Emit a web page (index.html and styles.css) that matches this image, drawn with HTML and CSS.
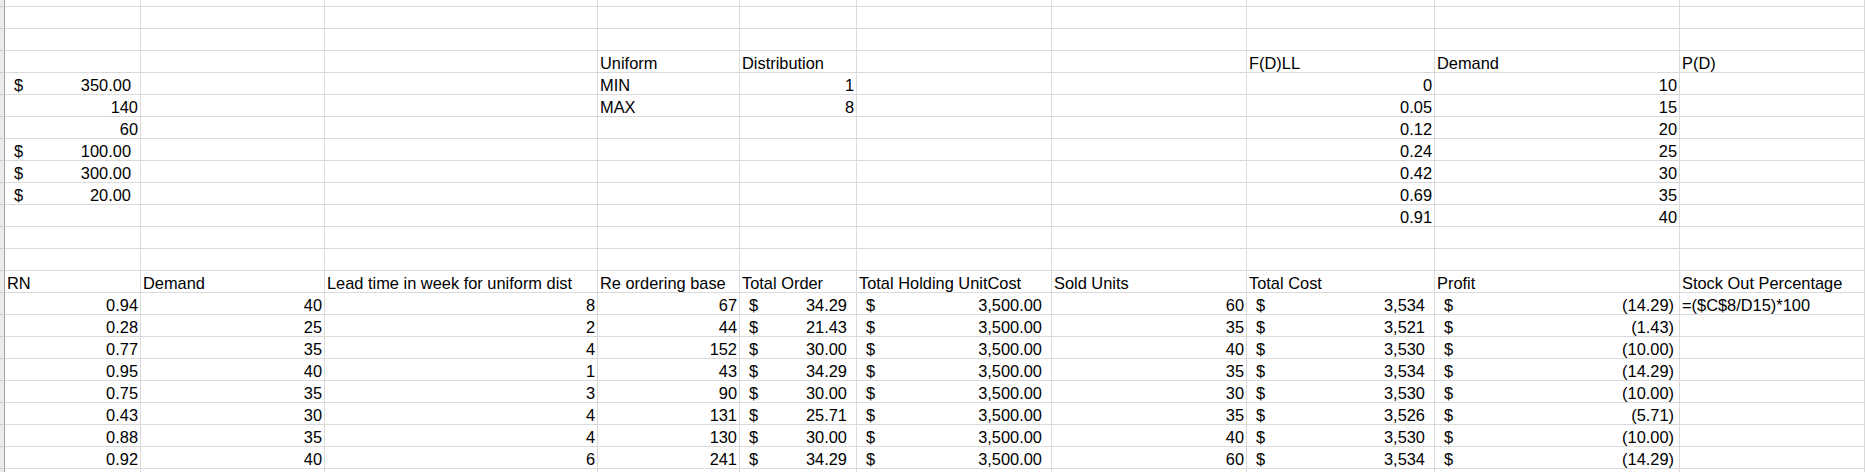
FILE: index.html
```html
<!DOCTYPE html>
<html lang="en">
<head>
<meta charset="utf-8">
<title>Inventory simulation sheet</title>
<link rel="stylesheet" href="styles.css">
</head>
<body>
<div class="sheet">
  <div class="r top"><span class="rh"></span><span></span><span></span><span></span><span></span><span></span><span></span><span></span><span></span><span></span><span></span></div>
  <div class="r"><span class="rh"></span><span></span><span></span><span></span><span></span><span></span><span></span><span></span><span></span><span></span><span></span></div>
  <div class="r"><span class="rh"></span><span></span><span></span><span></span><span></span><span></span><span></span><span></span><span></span><span></span><span></span></div>
  <div class="r"><span class="rh"></span><span></span><span></span><span></span><span>Uniform</span><span>Distribution</span><span></span><span></span><span>F(D)LL</span><span>Demand</span><span>P(D)</span></div>
  <div class="r"><span class="rh"></span><span class="a"><span>$</span><span>350.00</span></span><span></span><span></span><span>MIN</span><span class="n">1</span><span></span><span></span><span class="n">0</span><span class="n">10</span><span></span></div>
  <div class="r"><span class="rh"></span><span class="n">140</span><span></span><span></span><span>MAX</span><span class="n">8</span><span></span><span></span><span class="n">0.05</span><span class="n">15</span><span></span></div>
  <div class="r"><span class="rh"></span><span class="n">60</span><span></span><span></span><span></span><span></span><span></span><span></span><span class="n">0.12</span><span class="n">20</span><span></span></div>
  <div class="r"><span class="rh"></span><span class="a"><span>$</span><span>100.00</span></span><span></span><span></span><span></span><span></span><span></span><span></span><span class="n">0.24</span><span class="n">25</span><span></span></div>
  <div class="r"><span class="rh"></span><span class="a"><span>$</span><span>300.00</span></span><span></span><span></span><span></span><span></span><span></span><span></span><span class="n">0.42</span><span class="n">30</span><span></span></div>
  <div class="r"><span class="rh"></span><span class="a"><span>$</span><span>20.00</span></span><span></span><span></span><span></span><span></span><span></span><span></span><span class="n">0.69</span><span class="n">35</span><span></span></div>
  <div class="r"><span class="rh"></span><span></span><span></span><span></span><span></span><span></span><span></span><span></span><span class="n">0.91</span><span class="n">40</span><span></span></div>
  <div class="r"><span class="rh"></span><span></span><span></span><span></span><span></span><span></span><span></span><span></span><span></span><span></span><span></span></div>
  <div class="r"><span class="rh"></span><span></span><span></span><span></span><span></span><span></span><span></span><span></span><span></span><span></span><span></span></div>
  <div class="r"><span class="rh"></span><span>RN</span><span>Demand</span><span>Lead time in week for uniform dist</span><span>Re ordering base</span><span>Total Order</span><span>Total Holding UnitCost</span><span>Sold Units</span><span>Total Cost</span><span>Profit</span><span>Stock Out Percentage</span></div>
  <div class="r"><span class="rh"></span><span class="n">0.94</span><span class="n">40</span><span class="n">8</span><span class="n">67</span><span class="a"><span>$</span><span>34.29</span></span><span class="a"><span>$</span><span>3,500.00</span></span><span class="n">60</span><span class="a"><span>$</span><span>3,534</span></span><span class="a ng"><span>$</span><span>(14.29)</span></span><span>=($C$8/D15)*100</span></div>
  <div class="r"><span class="rh"></span><span class="n">0.28</span><span class="n">25</span><span class="n">2</span><span class="n">44</span><span class="a"><span>$</span><span>21.43</span></span><span class="a"><span>$</span><span>3,500.00</span></span><span class="n">35</span><span class="a"><span>$</span><span>3,521</span></span><span class="a ng"><span>$</span><span>(1.43)</span></span><span></span></div>
  <div class="r"><span class="rh"></span><span class="n">0.77</span><span class="n">35</span><span class="n">4</span><span class="n">152</span><span class="a"><span>$</span><span>30.00</span></span><span class="a"><span>$</span><span>3,500.00</span></span><span class="n">40</span><span class="a"><span>$</span><span>3,530</span></span><span class="a ng"><span>$</span><span>(10.00)</span></span><span></span></div>
  <div class="r"><span class="rh"></span><span class="n">0.95</span><span class="n">40</span><span class="n">1</span><span class="n">43</span><span class="a"><span>$</span><span>34.29</span></span><span class="a"><span>$</span><span>3,500.00</span></span><span class="n">35</span><span class="a"><span>$</span><span>3,534</span></span><span class="a ng"><span>$</span><span>(14.29)</span></span><span></span></div>
  <div class="r"><span class="rh"></span><span class="n">0.75</span><span class="n">35</span><span class="n">3</span><span class="n">90</span><span class="a"><span>$</span><span>30.00</span></span><span class="a"><span>$</span><span>3,500.00</span></span><span class="n">30</span><span class="a"><span>$</span><span>3,530</span></span><span class="a ng"><span>$</span><span>(10.00)</span></span><span></span></div>
  <div class="r"><span class="rh"></span><span class="n">0.43</span><span class="n">30</span><span class="n">4</span><span class="n">131</span><span class="a"><span>$</span><span>25.71</span></span><span class="a"><span>$</span><span>3,500.00</span></span><span class="n">35</span><span class="a"><span>$</span><span>3,526</span></span><span class="a ng"><span>$</span><span>(5.71)</span></span><span></span></div>
  <div class="r"><span class="rh"></span><span class="n">0.88</span><span class="n">35</span><span class="n">4</span><span class="n">130</span><span class="a"><span>$</span><span>30.00</span></span><span class="a"><span>$</span><span>3,500.00</span></span><span class="n">40</span><span class="a"><span>$</span><span>3,530</span></span><span class="a ng"><span>$</span><span>(10.00)</span></span><span></span></div>
  <div class="r"><span class="rh"></span><span class="n">0.92</span><span class="n">40</span><span class="n">6</span><span class="n">241</span><span class="a"><span>$</span><span>34.29</span></span><span class="a"><span>$</span><span>3,500.00</span></span><span class="n">60</span><span class="a"><span>$</span><span>3,534</span></span><span class="a ng"><span>$</span><span>(14.29)</span></span><span></span></div>
  <div class="r end"><span class="rh"></span><span></span><span></span><span></span><span></span><span></span><span></span><span></span><span></span><span></span><span></span></div>
</div>
</body>
</html>
```

FILE: styles.css
```css
* {
  box-sizing: border-box;
}

html,
body {
  margin: 0;
  padding: 0;
  background: #ffffff;
}

body {
  width: 1865px;
  height: 472px;
  overflow: hidden;
  font-family: "Liberation Sans", Arial, sans-serif;
  font-size: 16.4px;
  color: #000000;
}

.sheet {
  display: flex;
  flex-direction: column;
}

.r {
  display: grid;
  grid-template-columns: 5px 136px 184px 273px 142px 117px 195px 195px 188px 245px 1fr;
  height: 22px;
}

.r.top {
  height: 7px;
}

.r.end {
  height: 10px;
}

.r > span {
  border-right: 1px solid #dadada;
  border-bottom: 1px solid #dadada;
  padding: 3px 2px 0 2px;
  line-height: 18px;
  white-space: nowrap;
  overflow: hidden;
}

.r > .rh {
  background: #ececec;
  border-right-color: #a3a3a3;
  border-bottom-color: #cdcdcd;
  padding: 0;
}

.r > .n {
  text-align: right;
}

.r > .a {
  display: flex;
  justify-content: space-between;
  padding: 3px 9px 0 9px;
}

.r > .a.ng {
  padding-right: 5px;
}
```
